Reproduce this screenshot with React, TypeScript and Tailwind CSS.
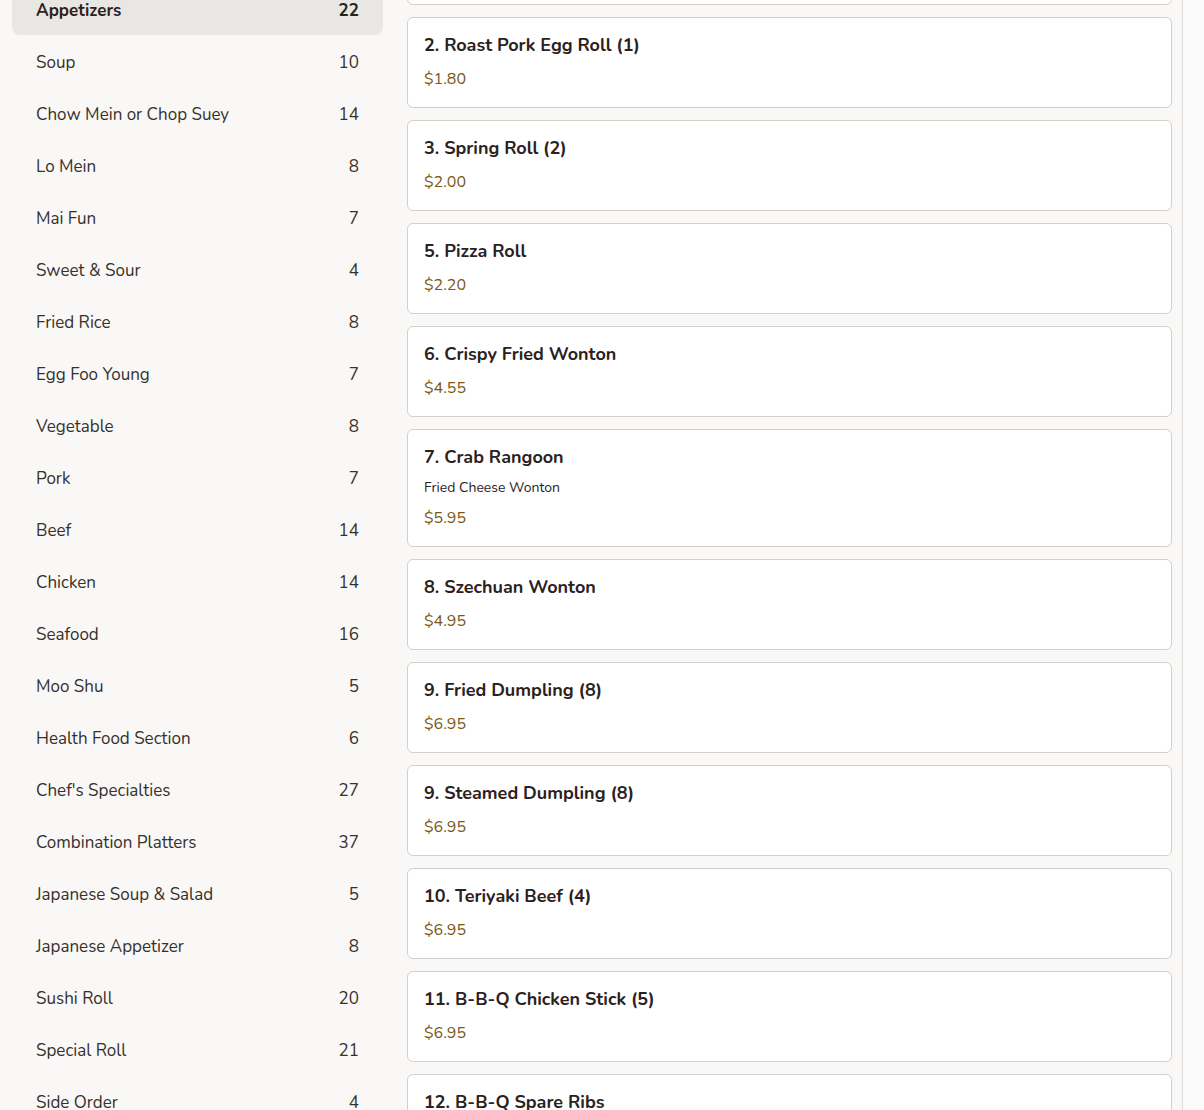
const categories = [
    ["Appetizers", 22],
    ["Soup", 10],
    ["Chow Mein or Chop Suey", 14],
    ["Lo Mein", 8],
    ["Mai Fun", 7],
    ["Sweet & Sour", 4],
    ["Fried Rice", 8],
    ["Egg Foo Young", 7],
    ["Vegetable", 8],
    ["Pork", 7],
    ["Beef", 14],
    ["Chicken", 14],
    ["Seafood", 16],
    ["Moo Shu", 5],
    ["Health Food Section", 6],
    ["Chef's Specialties", 27],
    ["Combination Platters", 37],
    ["Japanese Soup & Salad", 5],
    ["Japanese Appetizer", 8],
    ["Sushi Roll", 20],
    ["Special Roll", 21],
    ["Side Order", 4],
] as const;

const items: { name: string; desc?: string; price: string }[] = [
    { name: "1. Vegetable Egg Roll (1)", price: "$1.80" },
    { name: "2. Roast Pork Egg Roll (1)", price: "$1.80" },
    { name: "3. Spring Roll (2)", price: "$2.00" },
    { name: "5. Pizza Roll", price: "$2.20" },
    { name: "6. Crispy Fried Wonton", price: "$4.55" },
    { name: "7. Crab Rangoon", desc: "Fried Cheese Wonton", price: "$5.95" },
    { name: "8. Szechuan Wonton", price: "$4.95" },
    { name: "9. Fried Dumpling (8)", price: "$6.95" },
    { name: "9. Steamed Dumpling (8)", price: "$6.95" },
    { name: "10. Teriyaki Beef (4)", price: "$6.95" },
    { name: "11. B-B-Q Chicken Stick (5)", price: "$6.95" },
    { name: "12. B-B-Q Spare Ribs", price: "$7.95" },
];

function App() {
    return (
        <div className="h-[1110px] w-full overflow-hidden bg-[#f9f8f6] flex font-['Nunito','Lato',sans-serif] text-[#2b211d]">

            {/* Sidebar */}

            <div className="w-[371px] ml-3 -mt-[17px] flex flex-col shrink-0">
                {categories.map(([name, count], i) => (
                    <div
                        key={name}
                        className={`h-[52px] shrink-0 px-6 flex justify-between items-center pt-1 text-[17px] ${i === 0 ? "bg-[#e9e7e4] rounded-lg font-bold" : "text-[#36302c]"}`}
                    >
                        <span>{name}</span>
                        <span>{count}</span>
                    </div>
                ))}
            </div>

            {/* Items */}

            <div className="w-[765px] ml-6 -mt-[86px] flex flex-col gap-3 shrink-0">
                {items.map((item) => (
                    <div key={item.name} className="shrink-0 bg-white border border-[#d3d0cc] rounded-md p-4">
                        <div className="text-[18px] leading-[22px] font-bold">{item.name}</div>
                        {item.desc && <div className="mt-[10px] text-[14px] leading-5">{item.desc}</div>}
                        <div className={`${item.desc ? "mt-2" : "mt-[11px]"} text-[16px] leading-6 text-[#7a5714]`}>{item.price}</div>
                    </div>
                ))}
            </div>

            {/* Scroll strip */}

            <div className="ml-[10px] flex-1 h-full border-l border-[#dcdcdc] bg-[#fbfbfb]"></div>
        </div>
    )
}

export default App;
